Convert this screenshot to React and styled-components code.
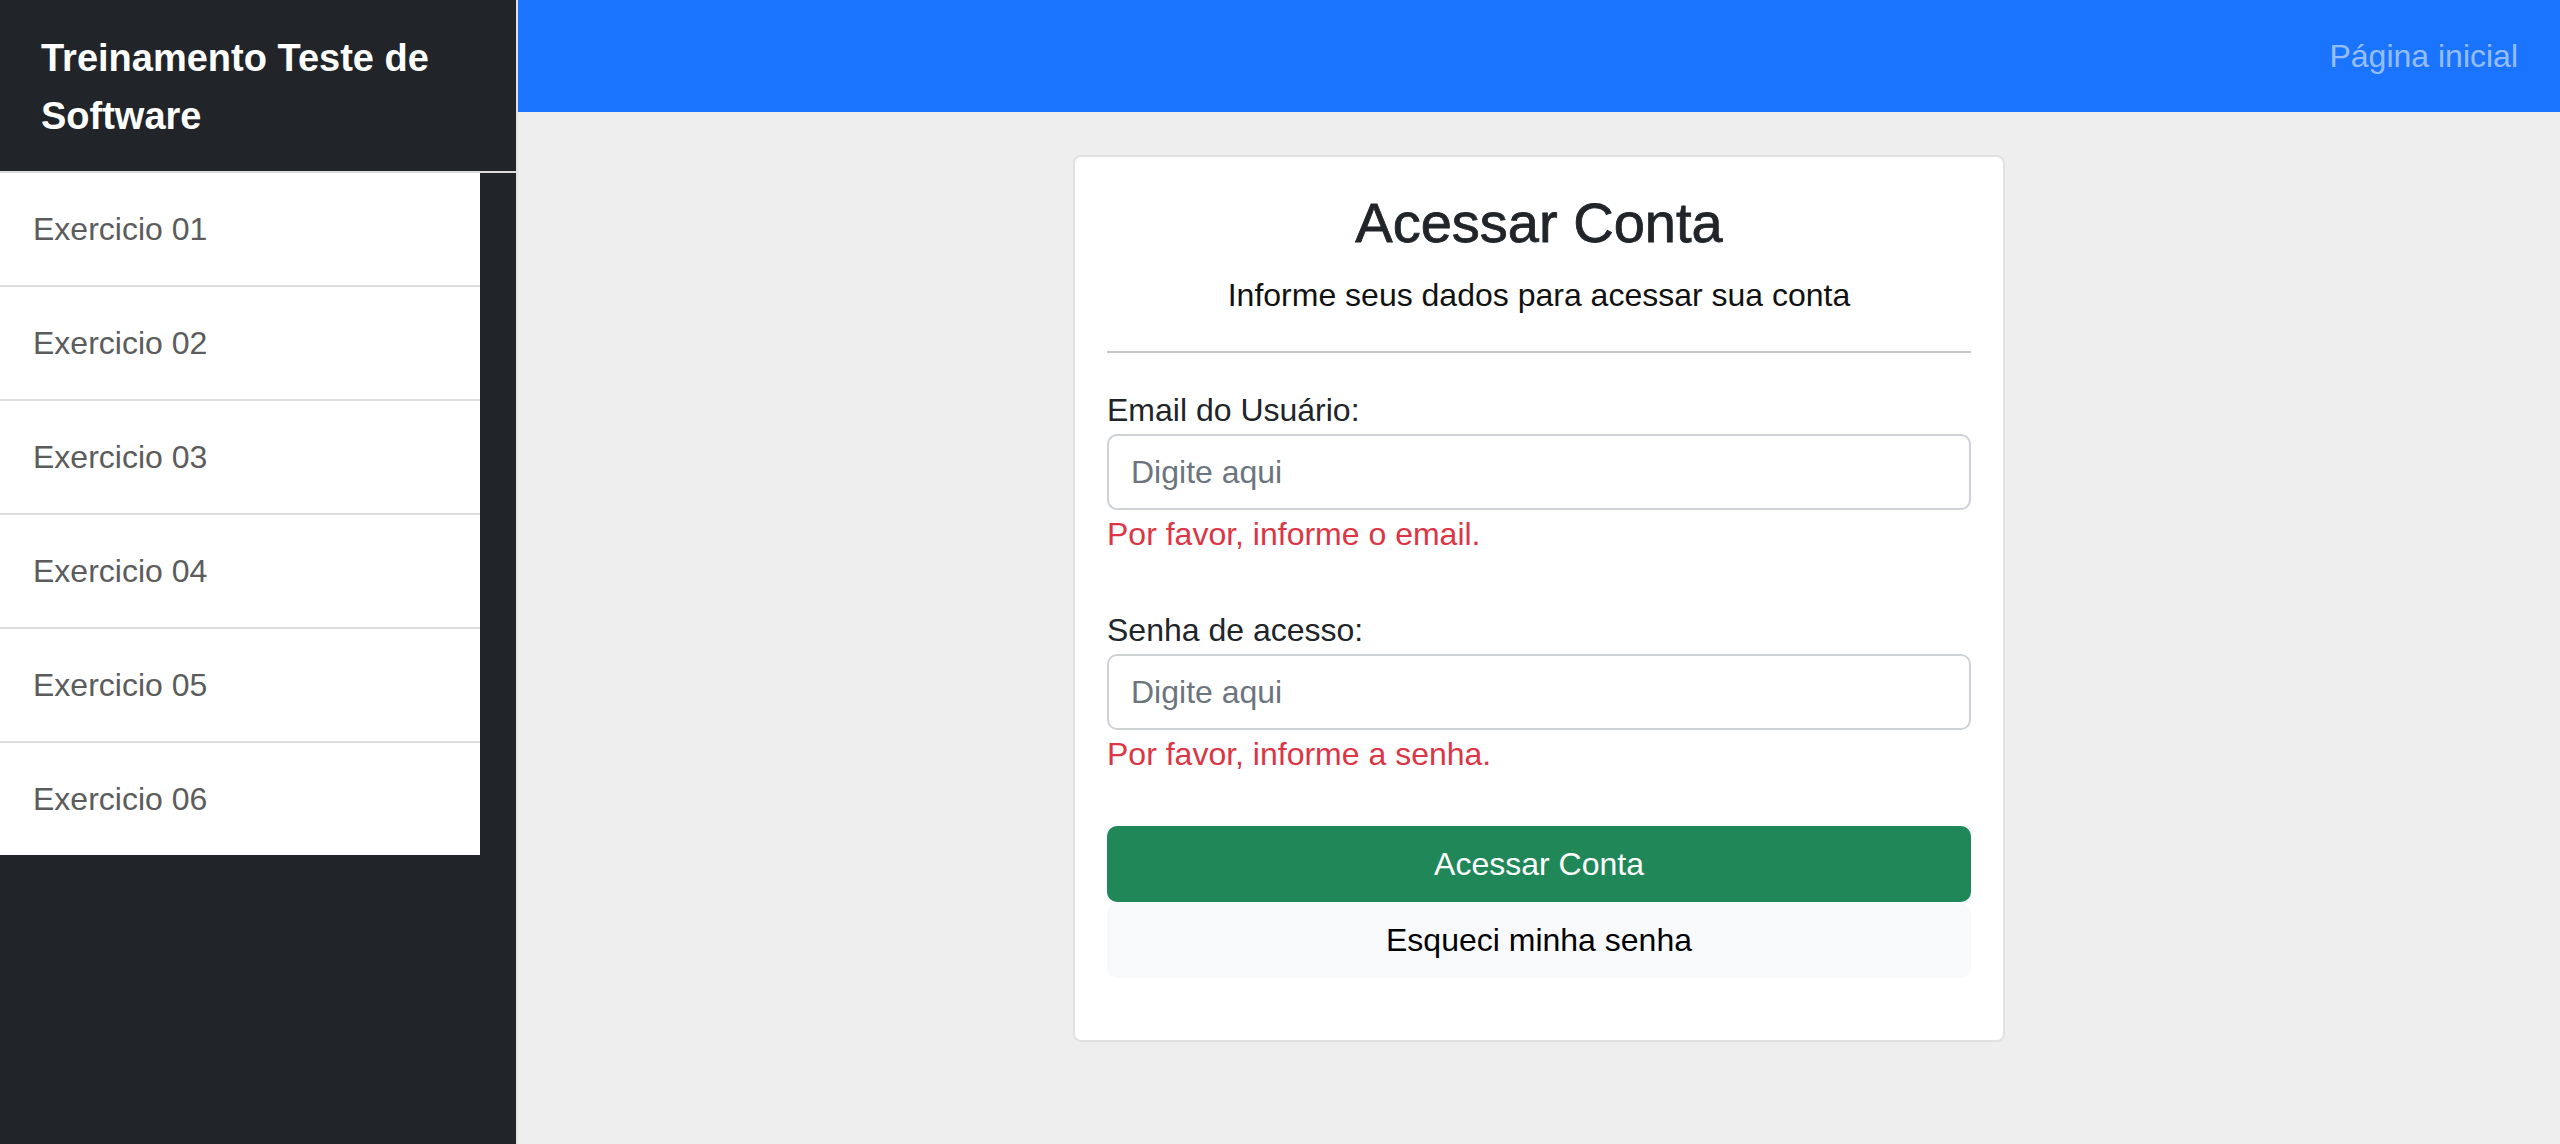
import styled, { createGlobalStyle } from "styled-components";

const GlobalStyle = createGlobalStyle`
  html, body {
    margin: 0;
    padding: 0;
  }
  body {
    font-family: "Liberation Sans", Arial, sans-serif;
    color: #212529;
    background: #eeeeee;
  }
  * {
    box-sizing: border-box;
  }
`;

const Page = styled.div`
  display: flex;
  min-height: 100vh;
`;

const Sidebar = styled.aside`
  width: 518px;
  flex-shrink: 0;
  background: #212529;
  border-right: 2px solid #e3e3e3;
  display: flex;
  flex-direction: column;
`;

const Brand = styled.div`
  height: 173px;
  padding: 29px 41px 0;
  font-size: 38px;
  font-weight: bold;
  line-height: 58px;
  color: #ffffff;
  border-bottom: 2px solid #dcdcdc;
`;

const Menu = styled.ul`
  list-style: none;
  margin: 0;
  padding: 0;
  width: 480px;
  background: #ffffff;
`;

const MenuItem = styled.li`
  height: ${(p) => (p.$last ? "112px" : "114px")};
  padding: 32px 33px;
  font-size: 32px;
  line-height: 48px;
  color: #5c5c5c;
  border-bottom: ${(p) => (p.$last ? "none" : "2px solid #dddddd")};
`;

const Main = styled.main`
  flex: 1;
  display: flex;
  flex-direction: column;
  background: #eeeeee;
`;

const TopBar = styled.header`
  height: 112px;
  background: #1b74fd;
  display: flex;
  align-items: center;
  justify-content: flex-end;
  padding-right: 42px;
`;

const NavLink = styled.span`
  font-size: 32px;
  line-height: 48px;
  color: rgba(255, 255, 255, 0.55);
`;

const Content = styled.div`
  display: flex;
  justify-content: center;
  padding-top: 43px;
`;

const Card = styled.section`
  width: 932px;
  background: #ffffff;
  border: 2px solid #dfe1e3;
  border-radius: 8px;
  padding: 32px 32px 62px;
`;

const Title = styled.h1`
  margin: 0 0 15px;
  font-size: 56px;
  font-weight: normal;
  line-height: 67px;
  text-align: center;
  color: #212529;
  -webkit-text-stroke: 0.8px #212529;
`;

const Subtitle = styled.p`
  margin: 0;
  font-size: 32px;
  line-height: 48px;
  text-align: center;
  color: #111111;
`;

const Divider = styled.hr`
  margin: 32px 0 33px;
  border: 0;
  border-top: 2px solid #c6c7c9;
`;

const Field = styled.div`
  display: flex;
  flex-direction: column;
  margin-bottom: 48px;
`;

const Label = styled.label`
  font-size: 32px;
  line-height: 48px;
  color: #212529;
`;

const Input = styled.input`
  height: 76px;
  width: 100%;
  padding: 0 22px;
  font-family: inherit;
  font-size: 32px;
  color: #212529;
  background: #ffffff;
  border: 2px solid #ced2d7;
  border-radius: 10px;
  outline: none;

  &::placeholder {
    color: #6c757d;
  }
`;

const Error = styled.div`
  font-size: 32px;
  line-height: 48px;
  color: #dc3545;
`;

const Button = styled.button`
  display: block;
  width: 100%;
  height: ${(p) => (p.$variant === "light" ? "75px" : "76px")};
  font-family: inherit;
  font-size: 32px;
  border: 0;
  border-radius: 10px;
  cursor: pointer;
  background: ${(p) => (p.$variant === "light" ? "#f8f9fa" : "#208758")};
  color: ${(p) => (p.$variant === "light" ? "#000000" : "#ffffff")};
`;

const Actions = styled.div`
  display: flex;
  flex-direction: column;
  gap: 1px;
`;

const exercises = ["01", "02", "03", "04", "05", "06"];

const App = () => {
  return (
    <>
      <GlobalStyle />
      <Page>
        <Sidebar>
          <Brand>Treinamento Teste de Software</Brand>
          <Menu>
            {exercises.map((n, i) => (
              <MenuItem key={n} $last={i === exercises.length - 1}>
                Exercicio {n}
              </MenuItem>
            ))}
          </Menu>
        </Sidebar>

        <Main>
          <TopBar>
            <NavLink>Página inicial</NavLink>
          </TopBar>

          <Content>
            <Card>
              <Title>Acessar Conta</Title>
              <Subtitle>Informe seus dados para acessar sua conta</Subtitle>
              <Divider />

              <Field>
                <Label>Email do Usuário:</Label>
                <Input type="text" placeholder="Digite aqui" />
                <Error>Por favor, informe o email.</Error>
              </Field>

              <Field>
                <Label>Senha de acesso:</Label>
                <Input type="password" placeholder="Digite aqui" />
                <Error>Por favor, informe a senha.</Error>
              </Field>

              <Actions>
                <Button>Acessar Conta</Button>
                <Button $variant="light">Esqueci minha senha</Button>
              </Actions>
            </Card>
          </Content>
        </Main>
      </Page>
    </>
  );
};

export default App;
